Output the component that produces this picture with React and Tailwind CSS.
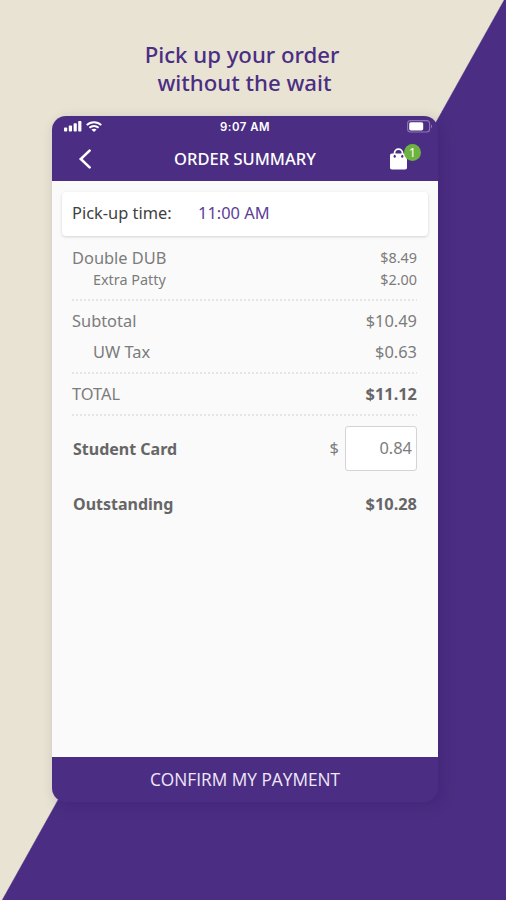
import React from "react";

function SignalIcon() {
  return (
    <svg width="18" height="11" viewBox="0 0 18 11" fill="#fff">
      <rect x="0" y="6.5" width="3.2" height="4" rx="0.8" />
      <rect x="4.8" y="4.5" width="3.2" height="6" rx="0.8" />
      <rect x="9.6" y="2.3" width="3.2" height="8.2" rx="0.8" />
      <rect x="14.2" y="0" width="3.2" height="10.5" rx="0.8" />
    </svg>
  );
}

function WifiIcon() {
  return (
    <svg width="16" height="11" viewBox="0 0 16 11" fill="none" stroke="#fff" strokeWidth="1.9">
      <path d="M0.8 4.2C4.8 0.2 11.2 0.2 15.2 4.2" />
      <path d="M3.4 6.8C6 4.4 10 4.4 12.6 6.8" />
      <path d="M5.4 8.6C6.9 7.3 9.1 7.3 10.6 8.6L8 11Z" fill="#fff" stroke="none" />
    </svg>
  );
}

function BatteryIcon() {
  return (
    <svg width="26" height="13" viewBox="0 0 26 13" fill="none">
      <rect x="0.6" y="0.6" width="22" height="11.4" rx="3" stroke="#8d74b5" strokeWidth="1.1" />
      <rect x="2.2" y="2.2" width="14" height="8.2" rx="1.6" fill="#fff" />
      <path d="M24 4.4C25.4 5 25.4 7.6 24 8.2Z" fill="#8d74b5" />
    </svg>
  );
}

function BagIcon() {
  return (
    <svg width="17" height="22" viewBox="0 0 17 22">
      <path d="M4.5 7V5.2A4 4 0 0 1 12.5 5.2V7" fill="none" stroke="#fff" strokeWidth="1.8" />
      <rect x="0" y="5.6" width="17" height="16" rx="1.8" fill="#fff" />
      <ellipse cx="4.7" cy="8.3" rx="1.1" ry="1.5" fill="#4b2e83" />
      <ellipse cx="12.3" cy="8.3" rx="1.1" ry="1.5" fill="#4b2e83" />
    </svg>
  );
}

function Divider() {
  return (
    <svg className="block" width="345" height="2" viewBox="0 0 345 2">
      <path d="M0 1H345" stroke="#cfcfcf" strokeWidth="1.2" strokeDasharray="2 2" />
    </svg>
  );
}

export default function App() {
  return (
    <div className="flex h-[900px] w-[507px] flex-col overflow-hidden bg-white font-['Noto_Sans',sans-serif]">
      <div className="flex h-[900px] w-[506px] flex-col bg-[linear-gradient(119.15deg,#e8e3d3_49.93%,#4b2e83_50.07%)]">
        {/* Headline */}
        <h1 className="flex h-[116px] flex-col items-center pt-[41px] pr-[22px] text-[22.2px] leading-[28px] font-medium text-[#4b2e83]">
          <span>Pick up your order</span>
          <span className="pl-[5px]">without the wait</span>
        </h1>

        {/* Phone */}
        <div className="ml-[52px] flex h-[686px] w-[386px] flex-col overflow-hidden rounded-[14px] bg-[#4b2e83] shadow-[4px_4px_14px_rgba(40,15,80,0.22)]">
          <div className="flex h-[65px] flex-col text-white">
            {/* Status bar */}
            <div className="grid h-[21px] grid-cols-[1fr_auto_1fr] items-center pr-[5px] pl-[12px]">
              <div className="flex items-center gap-[4px]">
                <SignalIcon />
                <WifiIcon />
              </div>
              <span className="mr-[7px] pt-[2px] text-center font-['Inter',sans-serif] text-[11.4px] leading-[17px] font-semibold tracking-[0.5px]">
                9:07 AM
              </span>
              <div className="flex justify-end">
                <BatteryIcon />
              </div>
            </div>
            {/* Nav bar */}
            <div className="grid h-[44px] grid-cols-[60px_1fr_60px] items-center">
              <svg className="ml-[26px]" width="14" height="20" viewBox="0 0 14 20" fill="none">
                <path d="M11.6 1.6L2.8 10L11.6 18.4" stroke="#fff" strokeWidth="2.6" strokeLinecap="round" />
              </svg>
              <span className="text-center text-[16.5px] font-medium">ORDER SUMMARY</span>
              <div className="relative ml-[12px]">
                <BagIcon />
                <span className="absolute -top-[4px] left-[14px] size-[17px] rounded-full bg-[#6cb33f] text-center text-[12px] leading-[17px] text-white">
                  1
                </span>
              </div>
            </div>
          </div>

          <div className="flex flex-1 flex-col bg-[#fafafa] text-[16.4px]">
            {/* Pick-up time */}
            <div className="mx-[10px] mt-[11px] flex h-[44px] items-center rounded-[4px] bg-white pb-[2px] pl-[10px] shadow-[0_1px_3px_rgba(0,0,0,0.16)]">
              <span className="w-[126px] text-[#404040]">Pick-up time:</span>
              <span className="text-[#5c3d99]">11:00 AM</span>
            </div>

            {/* Order lines */}
            <div className="flex flex-1 flex-col pt-[11px] pr-[21px] pl-[20px] text-[#7c7c7c]">
              <div className="flex h-[22px] items-center justify-between">
                <span>Double DUB</span>
                <span className="text-[14.4px]">$8.49</span>
              </div>
              <div className="flex h-[21px] items-center justify-between pl-[21px] text-[14.4px]">
                <span>Extra Patty</span>
                <span>$2.00</span>
              </div>
              <div className="pt-[9px]">
                <Divider />
              </div>
              <div className="mt-[5px] flex h-[30px] items-center justify-between">
                <span>Subtotal</span>
                <span>$10.49</span>
              </div>
              <div className="flex h-[32px] items-center justify-between pl-[21px]">
                <span>UW Tax</span>
                <span>$0.63</span>
              </div>
              <div className="pt-[4px]">
                <Divider />
              </div>
              <div className="flex h-[40px] items-center justify-between">
                <span>TOTAL</span>
                <span className="font-bold text-[#666]">$11.12</span>
              </div>
              <Divider />
              <div className="mt-[10px] flex h-[45px] items-center">
                <span className="flex-1 pl-px text-[16px] font-bold text-[#666]">Student Card</span>
                <span className="mr-[6px]">$</span>
                <span className="flex h-[45px] w-[72px] items-center justify-end rounded-[3px] border border-[#d4d4d4] bg-white pr-[4px]">
                  0.84
                </span>
              </div>
              <div className="mt-[17px] flex h-[32px] items-center justify-between pl-px font-bold text-[#666]">
                <span className="text-[16px]">Outstanding</span>
                <span>$10.28</span>
              </div>
            </div>
          </div>

          <button className="h-[45px] font-['Open_Sans',sans-serif] text-[17.3px] text-[#f0e8fa]">
            CONFIRM MY PAYMENT
          </button>
        </div>
      </div>
    </div>
  );
}
